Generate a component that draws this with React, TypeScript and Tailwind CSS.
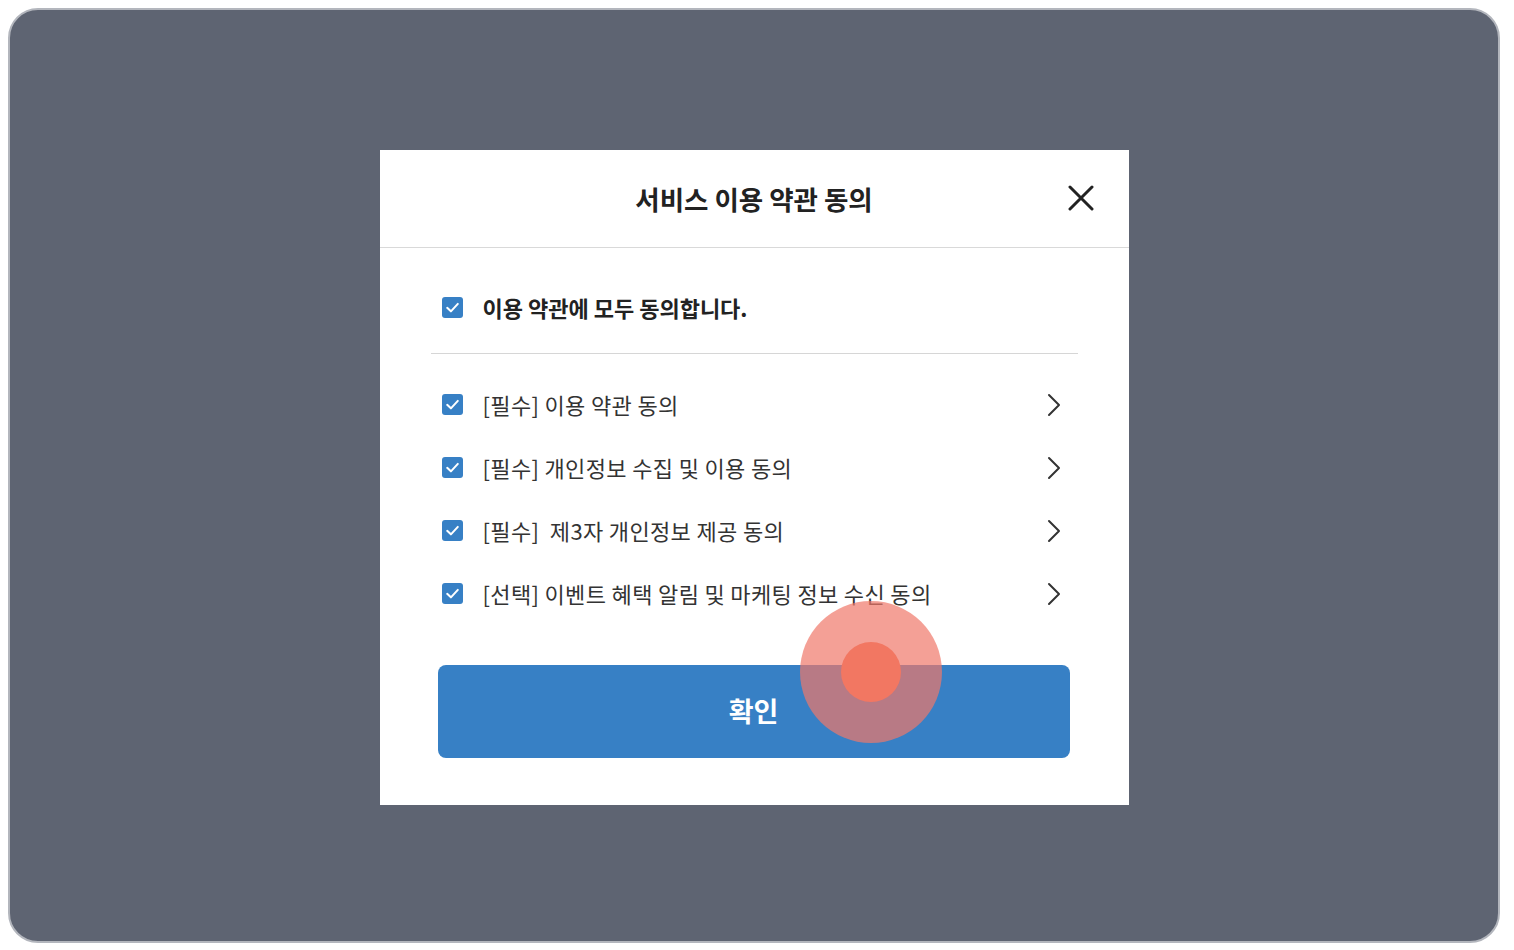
import React from "react";

const font = { fontFamily: '"Noto Sans CJK KR", "Noto Sans", sans-serif' };

function CheckBox() {
  return (
    <span className="flex h-[21px] w-[21px] shrink-0 items-center justify-center rounded-[3px] bg-[#3780c5]">
      <svg width="17" height="17" viewBox="0 0 16 16" fill="none">
        <path d="M3 8.3 L6.5 11.6 L13 4.6" stroke="#fff" strokeWidth="1.9" strokeLinecap="round" strokeLinejoin="round" />
      </svg>
    </span>
  );
}

function Chevron() {
  return (
    <svg width="14" height="24" viewBox="0 0 14 24" fill="none">
      <path d="M2 2 L12 12 L2 22" stroke="#333" strokeWidth="2" strokeLinecap="round" strokeLinejoin="round" />
    </svg>
  );
}

const rows = [
  "[필수] 이용 약관 동의",
  "[필수] 개인정보 수집 및 이용 동의",
  "[필수]  제3자 개인정보 제공 동의",
  "[선택] 이벤트 혜택 알림 및 마케팅 정보 수신 동의",
];

export default function App() {
  return (
    <div className="relative h-[950px] w-[1514px] bg-white pl-2 pt-2" style={font}>
      <div className="flex h-[935px] w-[1492px] items-center justify-center rounded-[30px] border-2 border-[#b3b6bd] bg-[#5e6472]">
        <div className="mt-[4px] flex w-[749px] flex-col bg-white">
          <div className="relative flex h-[98px] items-center justify-center border-b border-[#d9d9d9]">
            <span className="text-[26.5px] font-bold text-[#222]">서비스 이용 약관 동의</span>
            <svg className="absolute left-[688px] top-[35px]" width="26" height="26" viewBox="0 0 26 26" fill="none">
              <path d="M2 2 L24 24 M24 2 L2 24" stroke="#222" strokeWidth="3" strokeLinecap="round" />
            </svg>
          </div>
          <div className="flex flex-col px-[51px]">
            <div className="mt-[30px] flex h-[58px] items-center gap-[20px] px-[11px]">
              <CheckBox />
              <span className="text-[22px] font-bold text-[#222]">이용 약관에 모두 동의합니다.</span>
            </div>
            <div className="mt-[17px] h-px bg-[#d6d6d6]" />
            <div className="mt-[19px] flex flex-col">
              {rows.map((r) => (
                <div key={r} className="flex h-[63px] items-center gap-[20px] pl-[11px] pr-[17px]">
                  <CheckBox />
                  <span className="flex-1 whitespace-pre text-[22px] tracking-[0.35px] text-[#333]">{r}</span>
                  <Chevron />
                </div>
              ))}
            </div>
          </div>
          <div className="mb-[47px] ml-[58px] mr-[59px] mt-[40px] flex h-[93px] items-center justify-center rounded-[8px] bg-[#3780c5]">
            <span className="text-[27px] font-bold text-white">확인</span>
          </div>
        </div>
      </div>
      <div className="pointer-events-none absolute left-[800px] top-[601px] h-[142px] w-[142px] rounded-full bg-[#f07769]/70" />
      <div className="pointer-events-none absolute left-[841px] top-[642px] h-[60px] w-[60px] rounded-full bg-[#f27762]" />
    </div>
  );
}
